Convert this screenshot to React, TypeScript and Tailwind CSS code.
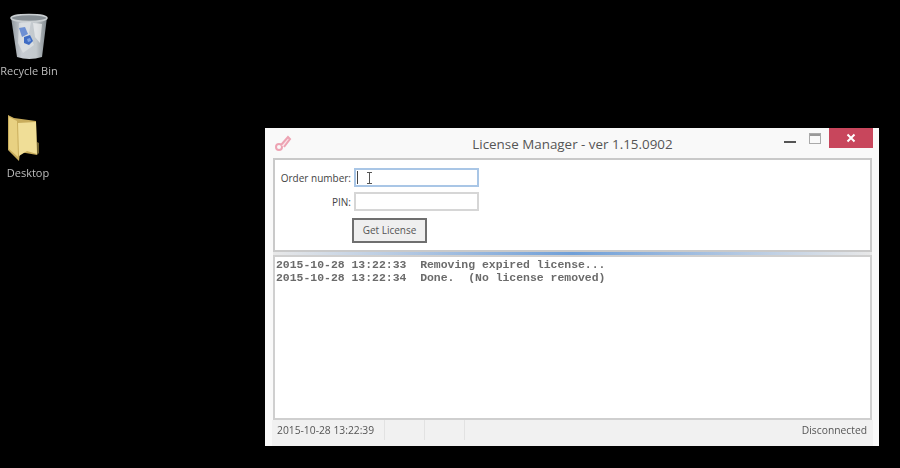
const LOG_LINES = [
  '2015-10-28 13:22:33  Removing expired license...',
  '2015-10-28 13:22:34  Done.  (No license removed)',
]

function RecycleBinIcon() {
  return (
    <svg width="40" height="48" viewBox="0 0 40 48">
      <defs>
        <linearGradient id="bin" x1="0" x2="1" y1="0" y2="0">
          <stop offset="0" stopColor="#8f979c" />
          <stop offset="0.3" stopColor="#c8cdd4" />
          <stop offset="0.7" stopColor="#c3c9cd" />
          <stop offset="1" stopColor="#7f878c" />
        </linearGradient>
      </defs>
      <path d="M2 4 L38 4 L33 44 Q20 48 8 44 Z" fill="url(#bin)" />
      <ellipse cx="20" cy="5" rx="18" ry="3.5" fill="#868e94" stroke="#c9ced1" strokeWidth="1.5" />
      <path d="M10 10 L22 9 L20 20 L25 32 L14 40 L9 30 Z" fill="#e6e9eb" opacity="0.6" />
      <path d="M24 10 L33 11 L31 30 L26 24 Z" fill="#eef0f1" opacity="0.7" />
      <path d="M10 15 L16 14 L19 21 L13 24 Z" fill="#5b83d0" opacity="0.85" />
      <path d="M15 24 L21 22 L24 28 L20 32 L15 30 Z" fill="#3f6cc4" />
      <path d="M18 26 L21 25 L22 28 L19 29 Z" fill="#7fa3e0" />
    </svg>
  )
}

function FolderIcon() {
  return (
    <svg className="mr-[9px]" width="32" height="48" viewBox="0 0 32 48">
      <path d="M0 0 L6 3 L28 6 L29 40 L12 37 L11 46 L0 35 Z" fill="#c9ad5c" />
      <path d="M1 2 L9 6 L10 42 L1 34 Z" fill="#e8d182" />
      <path d="M10 8 L28 7 L29 39 L19 36 L11 41 Z" fill="#f0de97" />
      <path d="M29 27 L31 28 L31 38 L29 40 Z" fill="#6f6232" />
    </svg>
  )
}

function DesktopIcon({ label, children }: { label: string; children: React.ReactNode }) {
  return (
    <div className="flex w-[58px] flex-col items-center">
      {children}
      <span className="mt-[2px] whitespace-nowrap font-['Open_Sans',sans-serif] text-[11px] leading-4 text-[#bdbdbd] blur-[0.4px]">
        {label}
      </span>
    </div>
  )
}

export default function App() {
  return (
    <div className="relative h-[468px] w-[900px] overflow-hidden bg-black font-['Open_Sans',sans-serif]">
      {/* desktop icons */}
      <div className="absolute left-0 top-[13px]">
        <DesktopIcon label="Recycle Bin">
          <RecycleBinIcon />
        </DesktopIcon>
      </div>
      <div className="absolute left-[-1px] top-[115px]">
        <DesktopIcon label="Desktop">
          <FolderIcon />
        </DesktopIcon>
      </div>

      {/* window */}
      <div className="absolute left-[265px] top-[128px] flex h-[318px] w-[614px] flex-col bg-[#f9f9f9] pl-[8px] pr-[7px]">
        {/* title bar */}
        <div className="relative flex h-[30px] shrink-0 items-center justify-center">
          <svg className="absolute left-[1px] top-[6px]" width="18" height="18" viewBox="0 0 18 18" fill="none">
            <circle cx="5" cy="13" r="3" stroke="#eda3b3" strokeWidth="2" />
            <path d="M7 11 L14 3 L16 5 L10 13" stroke="#eda3b3" strokeWidth="2" fill="#fbe4e9" />
          </svg>
          <span className="mt-[2px] text-[13.4px] leading-5 text-[#555]">License Manager - ver 1.15.0902</span>
          <div className="absolute right-[-1px] top-0 flex items-start">
            <div className="mr-[13px] mt-[13px] h-[2px] w-[12px] bg-[#555]" />
            <div className="mr-[8px] mt-[5px] flex h-[11px] w-[12px] flex-col border border-[#aaa]">
              <div className="h-[2px] bg-[#999]" />
            </div>
            <div className="flex h-[20px] w-[44px] items-center justify-center bg-[#c8465c]">
              <svg width="10" height="10" viewBox="0 0 10 10">
                <path d="M1.5 1.5 L8.5 8.5 M8.5 1.5 L1.5 8.5" stroke="#fff" strokeWidth="2" />
              </svg>
            </div>
          </div>
        </div>

        {/* form panel */}
        <div className="h-[94px] shrink-0 border-2 border-[#c9c9c9] bg-white pt-[8px] text-[10px] text-[#444]">
          <div className="flex h-[19px] items-center">
            <label className="w-[76px] whitespace-nowrap text-right leading-4">Order number:</label>
            <div className="relative ml-[3px] flex h-[19px] w-[125px] items-center border-2 border-[#a9c6e6] pl-[1px]">
              <div className="h-[13px] w-[1px] bg-[#444]" />
              {/* mouse cursor over the field */}
              <svg className="absolute left-[10px] top-[2px]" width="7" height="12" viewBox="0 0 7 12">
                <path d="M1 0.5 H6 M3.5 0.5 V11.5 M1 11.5 H6" stroke="#555" strokeWidth="1" fill="none" />
              </svg>
            </div>
          </div>
          <div className="mt-[5px] flex h-[19px] items-center">
            <label className="w-[76px] whitespace-nowrap text-right leading-4">PIN:</label>
            <div className="ml-[3px] h-[19px] w-[125px] border-2 border-[#d6d6d6]" />
          </div>
          <button className="ml-[77px] mt-[7px] flex h-[25px] w-[75px] items-center justify-center border-2 border-[#6f6f6f] bg-[#efefef] text-[10px] text-[#555]">
            Get License
          </button>
        </div>

        {/* progress line */}
        <div className="h-[3px] shrink-0 bg-gradient-to-r from-[#e8e8e8] via-[#6f9fd8] to-[#e8e8e8]" />

        {/* log */}
        <div className="h-[165px] shrink-0 border-2 border-[#cfcfcf] bg-white px-[1px] pt-[1px]">
          <pre className="whitespace-pre font-['Liberation_Mono',monospace] text-[11.45px] font-bold leading-[13px] text-[#6b6b6b] blur-[0.3px]">
            {LOG_LINES.join('\n')}
          </pre>
        </div>

        {/* status bar */}
        <div className="-mx-[1px] flex h-[26px] items-start bg-[#f1f1f1] text-[10.3px] text-[#555]">
          <div className="flex h-[20px] w-[113px] items-center border-r border-[#e2e2e2] pl-[5px] leading-none blur-[0.3px]">
            2015-10-28 13:22:39
          </div>
          <div className="h-[20px] w-[40px] border-r border-[#e2e2e2]" />
          <div className="h-[20px] w-[40px] border-r border-[#e2e2e2]" />
          <div className="flex h-[20px] flex-1 items-center justify-end pr-[6px] leading-none blur-[0.3px]">Disconnected</div>
        </div>
      </div>
    </div>
  )
}
